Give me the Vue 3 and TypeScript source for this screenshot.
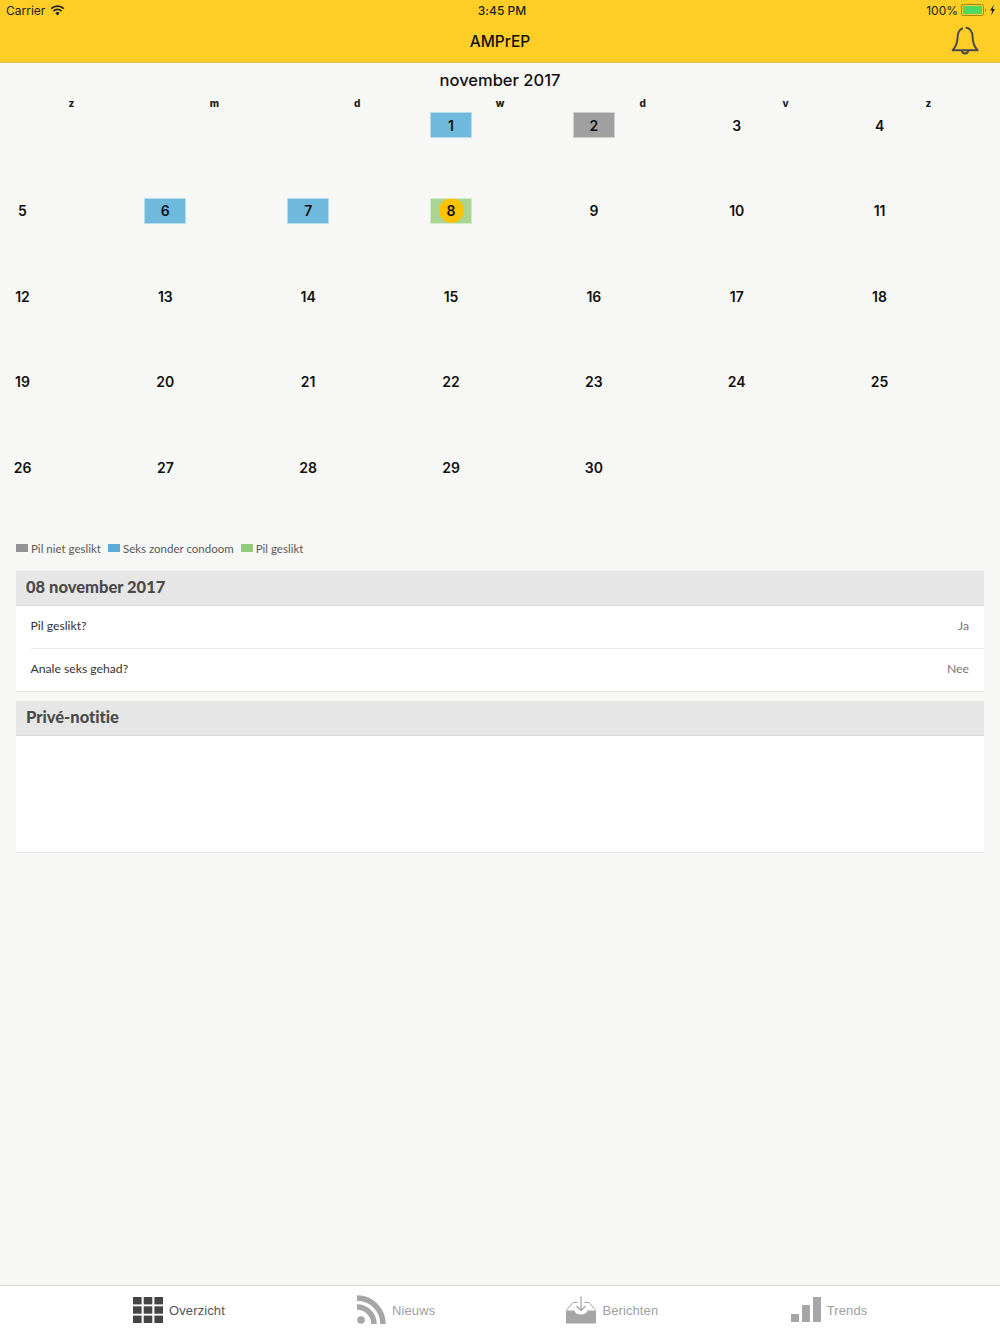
<template>
  <div class="page">
    <header class="top">
      <div class="status">
        <div class="status-left">
          <span>Carrier</span>
          <svg class="wifi" viewBox="0 0 16 12" width="15" height="11">
            <path d="M8 11.500 5.600 8.700a3.400 3.400 0 0 1 4.800 0Z" fill="#222" />
            <path d="M3.600 6.600a6.400 6.400 0 0 1 8.800 0" fill="none" stroke="#222" stroke-width="1.900" />
            <path d="M1.100 3.900a10 10 0 0 1 13.800 0" fill="none" stroke="#222" stroke-width="1.900" />
          </svg>
        </div>
        <div class="status-time">3:45 PM</div>
        <div class="status-right">
          <span>100%</span>
          <svg viewBox="0 0 34 12" width="34" height="12">
            <rect x="0.500" y="0.500" width="22" height="11" rx="2" fill="none" stroke="#9c8a20" />
            <rect x="2" y="2" width="19" height="8" rx="0.500" fill="#4cd964" />
            <path d="M24 4.200c1 .3 1.200 3.300 0 3.600Z" fill="#6b5f1c" />
            <path d="M33 0.500 29 6.500h2.200l-1 5 3.800-6.400h-2.300Z" fill="#222" />
          </svg>
        </div>
      </div>
      <div class="nav">
        <div class="nav-title">AMPrEP</div>
        <svg class="bell" viewBox="0 0 28 30" width="28" height="30">
          <path
            d="M14.600 1.500C20 2 21.400 6 21.600 11c.2 6 1.300 9.500 5 13.300H1.600C5.300 20.500 6.400 17 6.600 11 6.800 6.500 8.500 3.200 12 2.300"
            fill="none"
            stroke="#4a4a4a"
            stroke-width="2"
            stroke-linejoin="round"
          />
          <path d="M11 24.500a3 3 0 0 0 6 0" fill="none" stroke="#4a4a4a" stroke-width="2" />
        </svg>
      </div>
    </header>

    <main class="content">
      <h1 class="month">november 2017</h1>
      <div class="weekdays">
        <div v-for="(d, i) in weekdays" :key="i" class="weekday">{{ d }}</div>
      </div>
      <div class="days">
        <div v-for="(c, i) in cells" :key="i" class="cell">
          <div v-if="c.day" class="day" :class="c.kind">
            <span :class="{ today: c.day === 8 }">{{ c.day }}</span>
          </div>
        </div>
      </div>

      <div class="legend">
        <div v-for="l in legend" :key="l.label" class="legend-item">
          <i :class="l.kind"></i>
          <span>{{ l.label }}</span>
        </div>
      </div>

      <section class="block">
        <h2>08 november 2017</h2>
        <div class="rows">
          <div class="row">
            <span>Pil geslikt?</span>
            <span class="value">Ja</span>
          </div>
          <div class="row">
            <span>Anale seks gehad?</span>
            <span class="value">Nee</span>
          </div>
        </div>
      </section>

      <section class="block note">
        <h2>Privé-notitie</h2>
        <div class="note-body"></div>
      </section>
    </main>

    <nav class="tabs">
      <div class="tab active">
        <svg viewBox="0 0 30 26" width="30" height="26">
          <g fill="#444">
            <rect v-for="g in grid" :key="g.k" :x="g.x" :y="g.y" width="8.600" height="7.400" />
          </g>
        </svg>
        <span>Overzicht</span>
      </div>
      <div class="tab">
        <svg viewBox="0 0 30 30" width="30" height="30">
          <circle cx="5" cy="25" r="3.800" fill="#a6a6a6" />
          <path d="M1 12A17 17 0 0 1 18 29" fill="none" stroke="#a6a6a6" stroke-width="5.500" />
          <path d="M1 3A26 26 0 0 1 27 29" fill="none" stroke="#a6a6a6" stroke-width="5.500" />
        </svg>
        <span>Nieuws</span>
      </div>
      <div class="tab">
        <svg viewBox="0 0 30 28" width="30" height="28">
          <path d="M0.500 14 7 6.500h4.500M18.500 6.500H23l6.500 7.500" fill="none" stroke="#a6a6a6" stroke-width="1" />
          <path d="M0 14.500h8.500c.5 2.500 3 4 6.500 4s6-1.500 6.500-4H30V27.500H0Z" fill="#a6a6a6" />
          <path d="M15 0.500V14M10.500 10l4.500 4.500 4.500-4.500" fill="none" stroke="#a6a6a6" stroke-width="1.300" />
        </svg>
        <span>Berichten</span>
      </div>
      <div class="tab">
        <svg viewBox="0 0 30 26" width="30" height="26">
          <g fill="#a6a6a6">
            <rect x="0" y="17" width="8" height="8" />
            <rect x="11" y="8" width="8" height="17" />
            <rect x="22" y="0" width="8" height="25" />
          </g>
        </svg>
        <span>Trends</span>
      </div>
    </nav>
  </div>
</template>

<script setup lang="ts">
interface Cell {
  day: number
  kind: string
}

const weekdays = ['z', 'm', 'd', 'w', 'd', 'v', 'z']

const kinds: Record<number, string> = {
  1: 'sex',
  2: 'missed',
  6: 'sex',
  7: 'sex',
  8: 'taken',
}

// november 2017 begint op woensdag
const cells: Cell[] = [
  ...Array.from({ length: 3 }, () => ({ day: 0, kind: '' })),
  ...Array.from({ length: 30 }, (_, i) => ({ day: i + 1, kind: kinds[i + 1] || '' })),
]

const legend = [
  { label: 'Pil niet geslikt', kind: 'missed' },
  { label: 'Seks zonder condoom', kind: 'sex' },
  { label: 'Pil geslikt', kind: 'taken' },
]

const grid: { k: string; x: number; y: number }[] = []
for (let r = 0; r < 3; r++) {
  for (let c = 0; c < 3; c++) {
    grid.push({ k: `${r}-${c}`, x: c * 10.7, y: r * 9.3 })
  }
}
</script>

<style>
html,
body {
  margin: 0;
  background: #f7f7f5;
}
</style>

<style scoped>
.page {
  width: 1000px;
  height: 1334px;
  display: flex;
  flex-direction: column;
  background: #f7f7f5;
  font-family: 'Lato', 'Noto Sans', sans-serif;
  font-variant-ligatures: none;
  color: #111;
  overflow: hidden;
}

.top {
  height: 63px;
  box-sizing: border-box;
  background: #ffce26;
  border-bottom: 1px solid #e3c04a;
  flex: none;
}

.status {
  height: 20px;
  display: grid;
  grid-template-columns: 1fr auto 1fr;
  align-items: center;
  padding: 0 5px 0 6px;
  font-family: 'Inter', 'Liberation Sans', sans-serif;
  font-size: 12px;
  color: #222;
}

.status-left {
  display: flex;
  align-items: center;
  gap: 5px;
}

.status-time {
  font-weight: 500;
  padding-left: 3px;
}

.status-right {
  display: flex;
  justify-content: flex-end;
  align-items: center;
  gap: 3px;
}

.nav {
  height: 42px;
  position: relative;
  display: flex;
  align-items: center;
  justify-content: center;
}

.nav-title {
  font-family: 'Inter', 'Liberation Sans', sans-serif;
  font-size: 15.5px;
  font-weight: 500;
  color: #111;
}

.bell {
  position: absolute;
  right: 21px;
  top: 6px;
}

.content {
  flex: 1;
  padding: 0 16px;
}

.month {
  margin: 0 -16px;
  height: 32px;
  line-height: 34px;
  text-align: center;
  font-family: 'Inter', sans-serif;
  font-size: 16.5px;
  font-weight: 500;
  color: #111;
}

.weekdays,
.days {
  display: grid;
  grid-template-columns: repeat(7, 142.857px);
  margin: 0 -16px;
}

.weekdays {
  height: 17px;
}

.weekday {
  text-align: center;
  font-family: 'Inter', sans-serif;
  font-size: 10px;
  font-weight: 800;
  line-height: 16px;
  color: #222;
}

.days {
  grid-auto-rows: 85.6px;
}

.cell {
  padding-left: 1.5px;
}

.day {
  width: 42px;
  height: 26px;
  display: flex;
  align-items: center;
  justify-content: center;
  font-family: 'Inter', sans-serif;
  font-size: 14px;
  font-weight: 600;
  color: #111;
  outline: 1px solid rgba(255, 255, 255, 0.5);
  outline-offset: -1px;
}

.day:not(.sex):not(.missed):not(.taken) {
  outline: none;
}

.day.sex {
  background: #6fb9dc;
}

.day.missed {
  background: #a0a0a0;
}

.day.taken {
  background: #a8d592;
}

.today {
  width: 25px;
  height: 25px;
  border-radius: 50%;
  background: #fdc300;
  display: flex;
  align-items: center;
  justify-content: center;
}

.legend {
  display: flex;
  gap: 7px;
  height: 19px;
  align-items: center;
  margin-top: -1px;
  font-size: 11.5px;
  color: #5a5a5a;
}

.legend-item {
  display: flex;
  align-items: center;
  gap: 3px;
}

.legend-item i {
  display: block;
  width: 12px;
  height: 8px;
}

.legend-item i.missed {
  background: #949494;
}

.legend-item i.sex {
  background: #5cacd6;
}

.legend-item i.taken {
  background: #93cc79;
}

.block {
  margin-top: 13px;
}

.block h2 {
  margin: 0;
  height: 35px;
  box-sizing: border-box;
  padding: 0 10px 2px;
  display: flex;
  align-items: center;
  background: #e6e6e6;
  border-bottom: 1px solid #d8d8d8;
  font-size: 16.5px;
  font-weight: 900;
  color: #4a4a4a;
}

.rows {
  background: #fff;
  padding-left: 14.5px;
  border-bottom: 1px solid #e2e2e2;
}

.row {
  height: 40px;
  padding: 0 15px 2px 0;
  display: flex;
  justify-content: space-between;
  align-items: center;
  font-size: 12.2px;
  color: #333;
}

.row + .row {
  border-top: 1px solid #e8e8e8;
}

.value {
  color: #777;
}

.note {
  margin-top: 9px;
}

.note-body {
  height: 116px;
  background: #fff;
  border-bottom: 1px solid #e2e2e2;
}

.tabs {
  flex: none;
  height: 49px;
  box-sizing: border-box;
  background: #fff;
  border-top: 1px solid #d9d9d9;
  padding-left: 8px;
  display: grid;
  grid-template-columns: repeat(4, 216.7px);
  justify-content: center;
  align-items: center;
}

.tab {
  display: flex;
  align-items: center;
  justify-content: center;
  gap: 6px;
  font-family: 'Liberation Sans', Arial, sans-serif;
  font-size: 13px;
  letter-spacing: 0.1px;
  color: #a0a0a0;
}

.tab.active {
  color: #555;
}
</style>
